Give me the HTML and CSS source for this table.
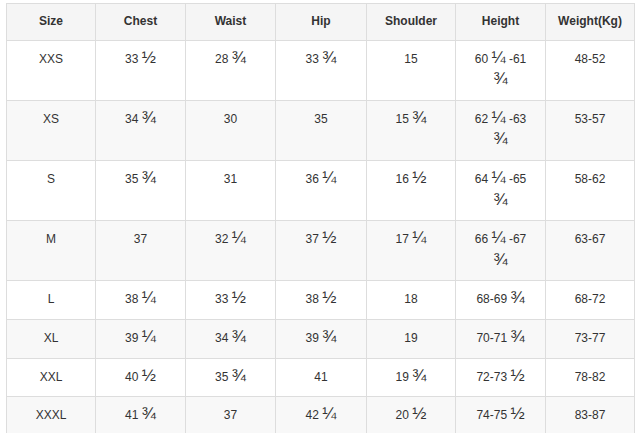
FILE: index.html
```html
<!DOCTYPE html>
<html>
<head>
<meta charset="utf-8">
<link rel="stylesheet" href="styles.css">
</head>
<body>
<table class="size-table">
  <colgroup>
    <col class="c1"><col class="c2"><col class="c3"><col class="c4"><col class="c5"><col class="c6"><col class="c7">
  </colgroup>
  <thead>
    <tr><th>Size</th><th>Chest</th><th>Waist</th><th>Hip</th><th>Shoulder</th><th>Height</th><th>Weight(Kg)</th></tr>
  </thead>
  <tbody>
    <tr><td>XXS</td><td>33 <span class="fr">½</span></td><td>28 <span class="fr">¾</span></td><td>33 <span class="fr">¾</span></td><td>15</td><td>60 <span class="fr">¼</span> -61 <span class="fr">¾</span></td><td>48-52</td></tr>
    <tr><td>XS</td><td>34 <span class="fr">¾</span></td><td>30</td><td>35</td><td>15 <span class="fr">¾</span></td><td>62 <span class="fr">¼</span> -63 <span class="fr">¾</span></td><td>53-57</td></tr>
    <tr><td>S</td><td>35 <span class="fr">¾</span></td><td>31</td><td>36 <span class="fr">¼</span></td><td>16 <span class="fr">½</span></td><td>64 <span class="fr">¼</span> -65 <span class="fr">¾</span></td><td>58-62</td></tr>
    <tr><td>M</td><td>37</td><td>32 <span class="fr">¼</span></td><td>37 <span class="fr">½</span></td><td>17 <span class="fr">¼</span></td><td>66 <span class="fr">¼</span> -67 <span class="fr">¾</span></td><td>63-67</td></tr>
    <tr><td>L</td><td>38 <span class="fr">¼</span></td><td>33 <span class="fr">½</span></td><td>38 <span class="fr">½</span></td><td>18</td><td>68-69 <span class="fr">¾</span></td><td>68-72</td></tr>
    <tr><td>XL</td><td>39 <span class="fr">¼</span></td><td>34 <span class="fr">¾</span></td><td>39 <span class="fr">¾</span></td><td>19</td><td>70-71 <span class="fr">¾</span></td><td>73-77</td></tr>
    <tr><td>XXL</td><td>40 <span class="fr">½</span></td><td>35 <span class="fr">¾</span></td><td>41</td><td>19 <span class="fr">¾</span></td><td>72-73 <span class="fr">½</span></td><td>78-82</td></tr>
    <tr><td>XXXL</td><td>41 <span class="fr">¾</span></td><td>37</td><td>42 <span class="fr">¼</span></td><td>20 <span class="fr">½</span></td><td>74-75 <span class="fr">½</span></td><td>83-87</td></tr>
  </tbody>
</table>
</body>
</html>
```

FILE: styles.css
```css
html, body {
  margin: 0;
  padding: 0;
  background: #fff;
}

body {
  padding: 3px 0 0 6px;
  font-family: "Liberation Sans", Arial, sans-serif;
  font-size: 12px;
  color: #333;
}

.size-table {
  border-collapse: collapse;
  table-layout: fixed;
  width: 629px;
}

.c1 { width: 89px; }
.c2 { width: 90px; }
.c3 { width: 90px; }
.c4 { width: 91px; }
.c5 { width: 89px; }
.c6 { width: 90px; }
.c7 { width: 89px; }

.size-table th,
.size-table td {
  border: 1px solid #dddddd;
  text-align: center;
  vertical-align: top;
  line-height: 21.6px;
  padding: 8px 12px;
  overflow: hidden;
}

.size-table th {
  background: #f5f5f5;
  font-weight: bold;
  color: #333;
  padding: 7px 2px;
}

.size-table tbody tr:nth-child(even) td {
  background: #f8f8f8;
}

.fr {
  font-size: 17px;
  line-height: 0;
}
```
